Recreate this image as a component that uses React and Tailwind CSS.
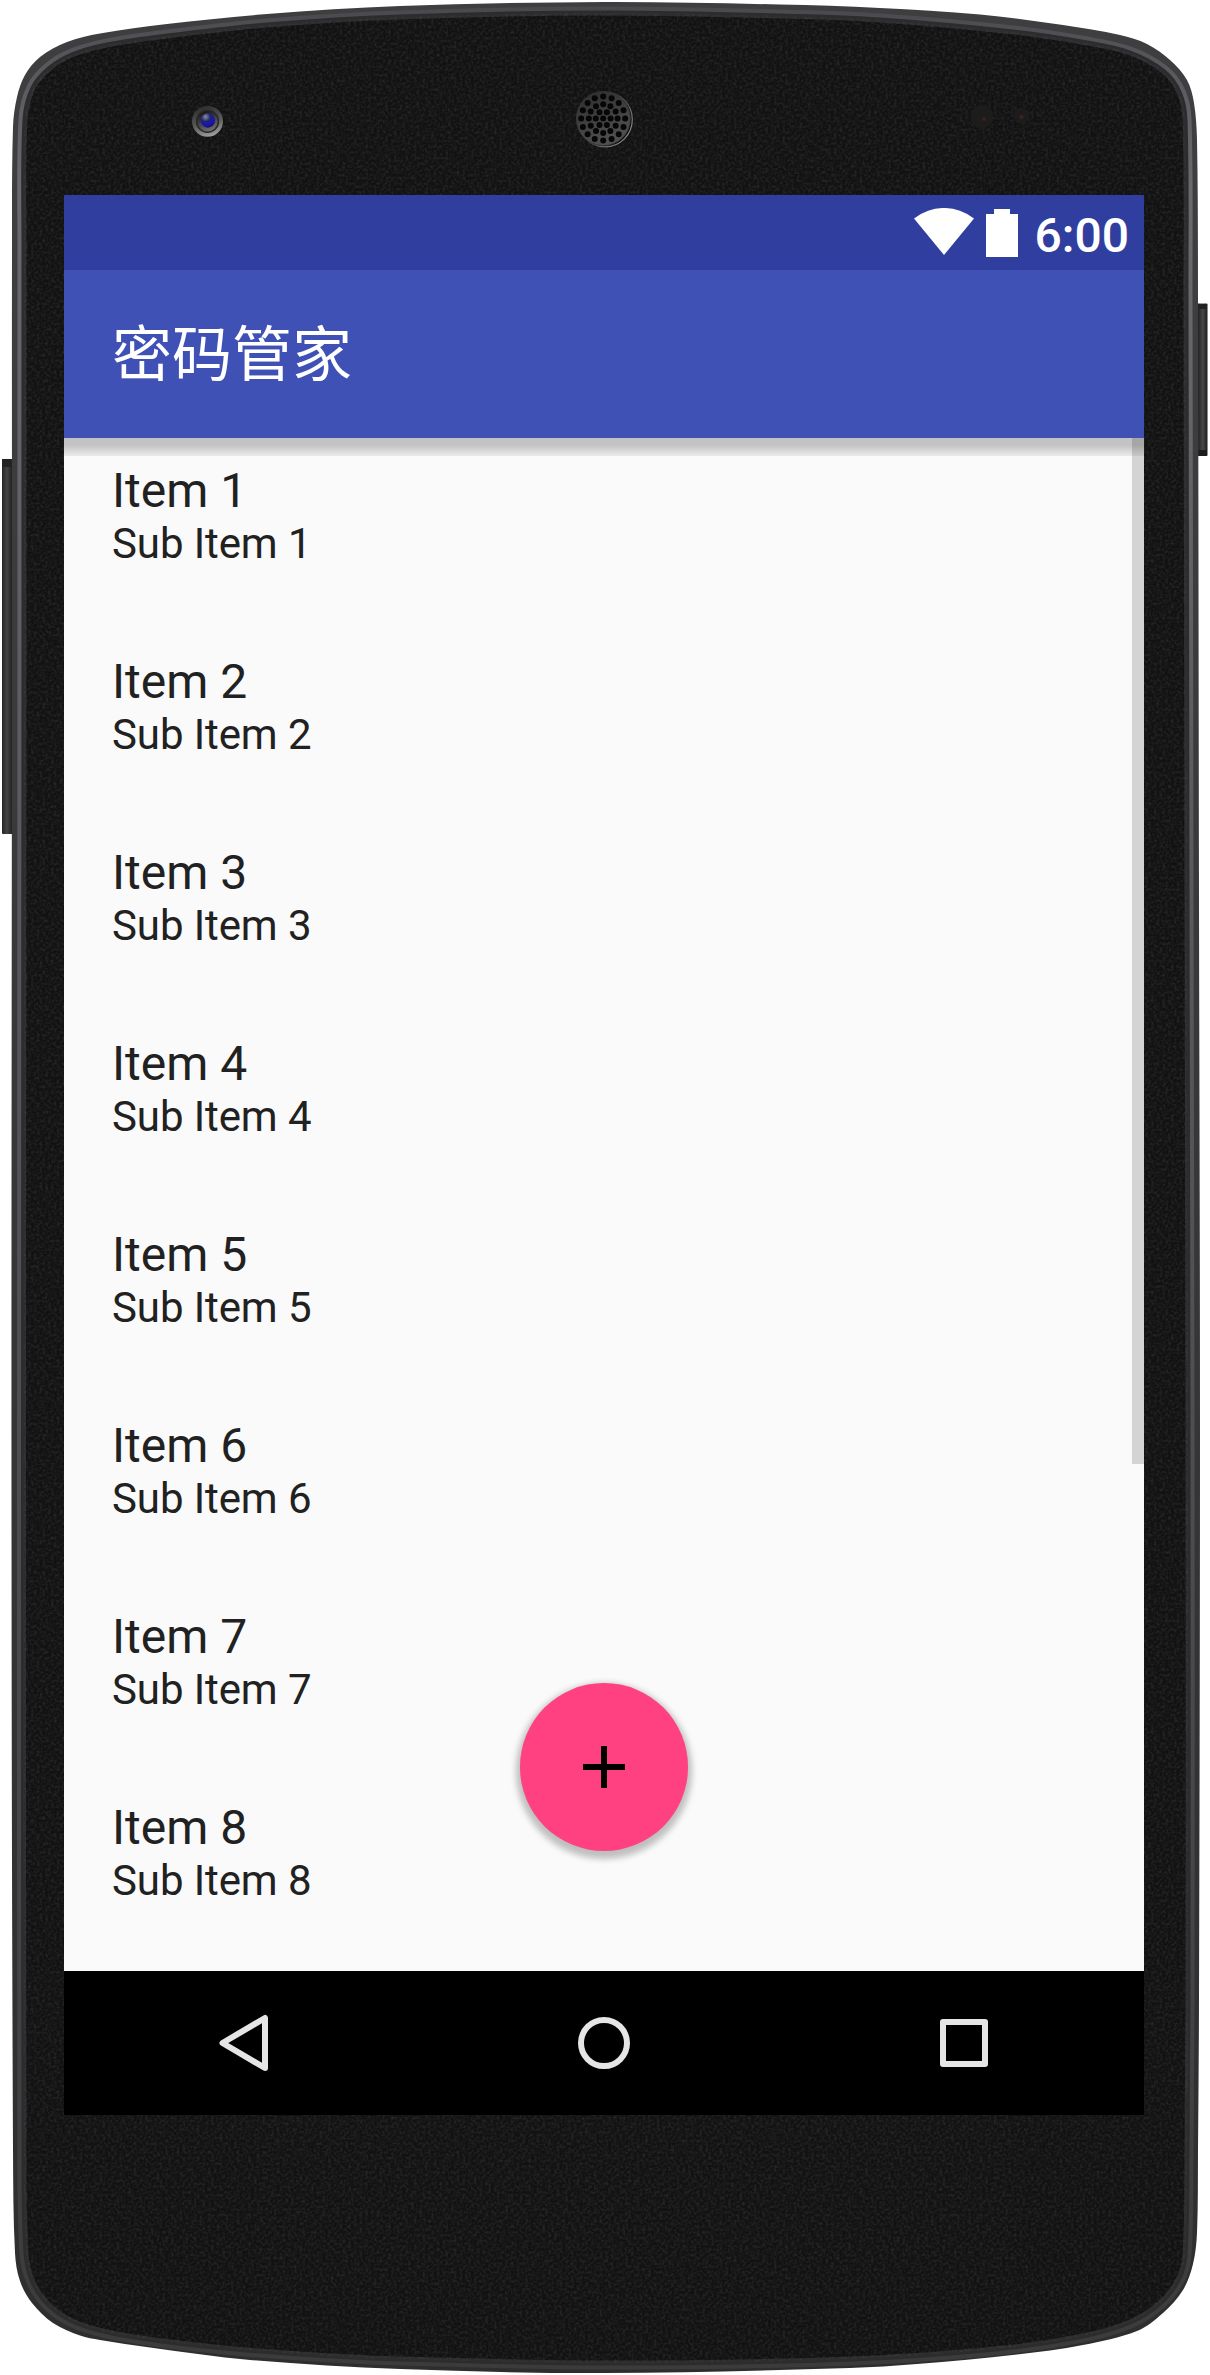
import React from "react";

const OUTER = [
  [12, 600], [12, 250], [13, 127], [17, 97], [25, 75], [40, 57], [67, 42], [100, 33.5], [167, 24], [267, 14], [400, 6], [604, 2],
  [780, 4.5], [880, 8], [980, 14.5], [1063, 25], [1120, 35], [1147, 44], [1170, 60], [1187, 80], [1194, 103], [1197, 140], [1198, 300], [1199, 900],
  [1200, 1430], [1199, 2000], [1198, 2150], [1197, 2233], [1193, 2264], [1183, 2290], [1163, 2313], [1137, 2331], [1083, 2345], [1017, 2354.5], [917, 2364], [850, 2368], [604, 2373],
  [400, 2369], [250, 2360], [150, 2347.5], [100, 2340], [80, 2335.5], [53, 2323], [32, 2303], [20, 2281], [15, 2253], [13, 2150], [11.5, 1500],
];

const INNER = [
  [24, 600], [24, 250], [25, 120], [33, 88], [50, 68], [73, 54.5], [107, 45], [167, 36], [267, 25], [400, 17], [604, 13],
  [780, 16], [880, 20], [1013, 32], [1087, 43], [1130, 53], [1163, 71], [1179, 92], [1185, 120], [1186, 300], [1187, 900],
  [1188, 1430], [1188, 2000], [1187, 2150], [1185, 2255], [1178, 2280], [1160, 2303], [1130, 2322], [1083, 2336], [1000, 2348.5], [850, 2359], [604, 2363],
  [400, 2359], [300, 2354], [200, 2345.5], [117, 2334], [77, 2323], [50, 2306], [33, 2282], [26, 2253], [24, 2150], [23.5, 1500],
];

function smooth(pts) {
  const n = pts.length;
  let d = `M${pts[0][0]} ${pts[0][1]}`;
  for (let i = 0; i < n; i++) {
    const p0 = pts[(i - 1 + n) % n];
    const p1 = pts[i];
    const p2 = pts[(i + 1) % n];
    const p3 = pts[(i + 2) % n];
    const len = Math.hypot(p2[0] - p1[0], p2[1] - p1[1]) / 3;
    const a = Math.hypot(p2[0] - p0[0], p2[1] - p0[1]);
    const b = Math.hypot(p3[0] - p1[0], p3[1] - p1[1]);
    const c1 = [p1[0] + ((p2[0] - p0[0]) / a) * len, p1[1] + ((p2[1] - p0[1]) / a) * len];
    const c2 = [p2[0] - ((p3[0] - p1[0]) / b) * len, p2[1] - ((p3[1] - p1[1]) / b) * len];
    d += `C${c1[0].toFixed(1)} ${c1[1].toFixed(1)} ${c2[0].toFixed(1)} ${c2[1].toFixed(1)} ${p2[0]} ${p2[1]}`;
  }
  return d + "Z";
}

const ring = (count, radius) =>
  Array.from({ length: count }, (_, i) => {
    const t = (i / count) * Math.PI * 2;
    return [603.2 + Math.cos(t) * radius, 118.6 + Math.sin(t) * radius];
  });

const HOLES = [[603.2, 118.6], ...ring(6, 7.4), ...ring(12, 14.4), ...ring(16, 22)];

function PhoneBody() {
  const outer = smooth(OUTER);
  const inner = smooth(INNER);
  return (
    <svg className="absolute inset-0" width="1210" height="2375" viewBox="0 0 1210 2375" aria-hidden="true">
      <defs>
        <linearGradient id="rim" x1="0" y1="0" x2="0" y2="2375" gradientUnits="userSpaceOnUse">
          <stop offset="0" stopColor="#3e3e40" />
          <stop offset="0.1" stopColor="#3e3e41" />
          <stop offset="1" stopColor="#2e2e2f" />
        </linearGradient>
        <linearGradient id="edge" x1="0" y1="0" x2="0" y2="2375" gradientUnits="userSpaceOnUse">
          <stop offset="0" stopColor="#48484b" />
          <stop offset="0.03" stopColor="#5a5a5e" />
          <stop offset="0.08" stopColor="#6a6a6e" />
          <stop offset="0.4" stopColor="#58585c" />
          <stop offset="0.8" stopColor="#454547" />
          <stop offset="1" stopColor="#3b3b3c" />
        </linearGradient>
        <linearGradient id="keyL" x1="0" y1="0" x2="1" y2="0">
          <stop offset="0" stopColor="#242424" />
          <stop offset="0.35" stopColor="#444" />
          <stop offset="0.75" stopColor="#1e1e1e" />
        </linearGradient>
        <linearGradient id="keyR" x1="0" y1="0" x2="1" y2="0">
          <stop offset="0.3" stopColor="#222" />
          <stop offset="0.65" stopColor="#484848" />
          <stop offset="1" stopColor="#1c1c1c" />
        </linearGradient>
        <linearGradient id="lens" x1="0.3" y1="0" x2="0.6" y2="1">
          <stop offset="0" stopColor="#2b2b2b" />
          <stop offset="0.55" stopColor="#5a5a5a" />
          <stop offset="1" stopColor="#a0a0a0" />
        </linearGradient>
        <linearGradient id="lensIn" x1="0.3" y1="0" x2="0.7" y2="1">
          <stop offset="0" stopColor="#111" />
          <stop offset="1" stopColor="#777" />
        </linearGradient>
        <radialGradient id="glass" cx="0.35" cy="0.25" r="0.8">
          <stop offset="0" stopColor="#8393a0" />
          <stop offset="0.4" stopColor="#23236a" />
          <stop offset="0.75" stopColor="#1414c0" />
          <stop offset="1" stopColor="#1a1030" />
        </radialGradient>
        <linearGradient id="grille" x1="0" y1="0" x2="0.4" y2="1">
          <stop offset="0" stopColor="#2b2b2b" />
          <stop offset="1" stopColor="#505050" />
        </linearGradient>
        <linearGradient id="grilleRim" x1="0" y1="0" x2="1" y2="0.7">
          <stop offset="0.3" stopColor="#222" />
          <stop offset="1" stopColor="#8a8a8a" />
        </linearGradient>
        <filter id="grain" x="0" y="0" width="100%" height="100%">
          <feTurbulence type="fractalNoise" baseFrequency="0.35" numOctaves="2" seed="4" />
          <feColorMatrix type="matrix" values="0 0 0 0 0.12  0 0 0 0 0.12  0 0 0 0 0.12  1.6 0 0 0 -0.6" />
        </filter>
        <clipPath id="face">
          <path d={inner} />
        </clipPath>
      </defs>

      <rect x="2" y="459" width="14" height="375" rx="1" fill="url(#keyL)" />
      <rect x="2" y="459" width="11" height="8" fill="#222" />
      <rect x="1194" y="303.500" width="13.500" height="152.500" rx="1" fill="url(#keyR)" />
      <rect x="1198" y="304" width="9" height="5" fill="#222" />
      <rect x="1198" y="450" width="9" height="6" fill="#1c1c1c" />

      <path d={outer} fill="url(#rim)" />
      <path d={inner} fill="none" stroke="url(#edge)" strokeWidth="13" />
      <path d={inner} fill="#121212" stroke="#2c2c2e" strokeWidth="5" />
      <g clipPath="url(#face)">
        <rect width="1210" height="2375" filter="url(#grain)" opacity="0.35" />
      </g>

      <circle cx="207.500" cy="121.300" r="15.500" fill="url(#lens)" />
      <circle cx="207.500" cy="121.300" r="11" fill="url(#lensIn)" stroke="#2a2a2a" strokeWidth="1.500" />
      <circle cx="207.800" cy="120.500" r="7.200" fill="url(#glass)" />

      <circle cx="605" cy="119.500" r="27.300" fill="#0c0c0c" stroke="url(#grilleRim)" strokeWidth="1.200" />
      <circle cx="603.400" cy="118.600" r="27" fill="url(#grille)" stroke="#3a3a3a" strokeWidth="0.800" />
      {HOLES.map(([x, y], i) => (
        <circle key={i} cx={x} cy={y} r="3" fill="#060606" />
      ))}

      <circle cx="982" cy="116.500" r="11.500" fill="#1c1c1c" />
      <circle cx="984" cy="119" r="2" fill="#3a2218" />
      <circle cx="1021.500" cy="116" r="8" fill="#1c1c1c" />
      <circle cx="1021.500" cy="117" r="2" fill="#40241a" />
    </svg>
  );
}

function StatusBar() {
  return (
    <div className="flex h-[75px] items-start justify-end bg-[#303f9f] pr-[15px] text-white">
      <svg className="mt-[13px] mr-3" width="60" height="47" viewBox="0 0 60 47" fill="currentColor">
        <path d="M30 47L0 10.500A48 48 0 0 1 60 10.500Z" />
      </svg>
      <svg className="mt-[14px] mr-[17px]" width="32" height="48" viewBox="0 0 32 48" fill="currentColor">
        <path d="M8 0h16v5h8v43H0V5h8z" />
      </svg>
      <span className="mt-[13px] text-[48px] leading-[56px] font-medium">6:00</span>
    </div>
  );
}

function AppBar() {
  return (
    <header className="flex h-[168px] items-center bg-[#3f51b5] pt-[3px] pl-12">
      <h1 className="font-['Roboto','Noto_Sans_CJK_SC',sans-serif] text-[60px] leading-[72px] text-white">密码管家</h1>
    </header>
  );
}

function ItemList() {
  return (
    <main className="relative h-[1533px] overflow-hidden bg-[#fafafa]">
      <ul className="pt-[25px] pl-12 text-[#212121]">
        {[1, 2, 3, 4, 5, 6, 7, 8].map((n) => (
          <li key={n} className="h-[191px]">
            <p className="text-[48px] leading-[56px]">Item {n}</p>
            <p className="text-[42px] leading-[49px] tracking-[-0.1px]">Sub Item {n}</p>
          </li>
        ))}
      </ul>
      <div className="absolute inset-x-0 top-0 h-[18px] bg-linear-to-b from-black/22 from-40% to-black/6" />
      <div className="absolute top-0 right-0 h-[1026px] w-3 bg-black/15" />
      <button
        aria-label="Add"
        className="absolute bottom-[120px] left-1/2 flex size-[168px] -translate-x-1/2 items-center justify-center rounded-full bg-[#ff4081] shadow-[0_4px_6px_4px_rgba(0,0,0,0.24)]"
      >
        <svg width="42" height="42" viewBox="0 0 42 42" fill="#000">
          <path d="M18 0h6v18h18v6H24v18h-6V24H0v-6h18z" />
        </svg>
      </button>
    </main>
  );
}

function NavBar() {
  return (
    <nav className="grid h-36 grid-cols-3 place-items-center bg-black text-[#e5e5e5]">
      <svg width="60" height="60" viewBox="0 0 60 60" fill="none" stroke="currentColor" strokeWidth="6" strokeLinejoin="round">
        <path d="M8.500 30L51 5v50z" />
      </svg>
      <svg width="60" height="60" viewBox="0 0 60 60" fill="none" stroke="currentColor" strokeWidth="6">
        <circle cx="30" cy="30" r="23" />
      </svg>
      <svg width="60" height="60" viewBox="0 0 60 60" fill="none" stroke="currentColor" strokeWidth="6" strokeLinejoin="round">
        <path d="M9 9h42v42H9z" />
      </svg>
    </nav>
  );
}

export default function App() {
  return (
    <div className="relative h-[2375px] w-[1210px] overflow-hidden bg-white pt-[195px] pl-16 font-['Roboto',sans-serif]">
      <PhoneBody />
      <div className="relative w-[1080px]">
        <StatusBar />
        <AppBar />
        <ItemList />
        <NavBar />
      </div>
    </div>
  );
}
